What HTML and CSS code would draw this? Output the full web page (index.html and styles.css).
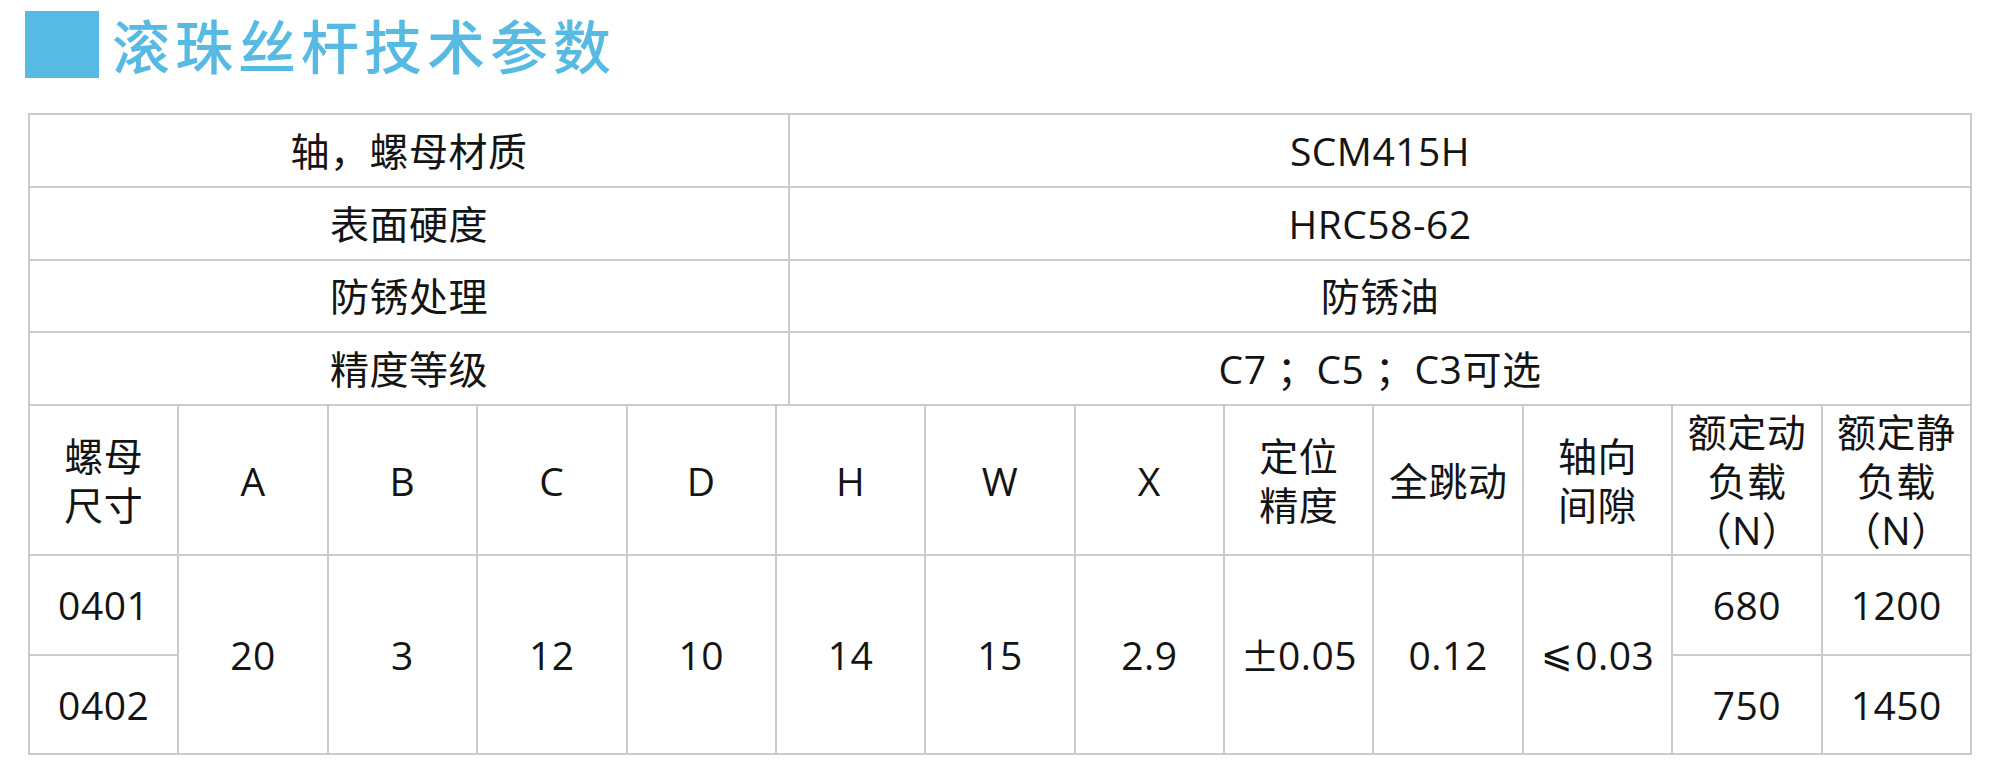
FILE: index.html
```html
<!DOCTYPE html>
<html lang="zh-CN">
<head>
<meta charset="utf-8">
<title>滚珠丝杆技术参数</title>
<link rel="stylesheet" href="styles.css">
</head>
<body>
<div class="page">
  <header class="heading">
    <span class="heading-mark"></span>
    <h1 class="heading-title">滚珠丝杆技术参数</h1>
  </header>

  <div class="spec">
    <div class="spec-top">
      <div class="cell">轴，螺母材质</div>
      <div class="cell latin">SCM415H</div>
      <div class="cell">表面硬度</div>
      <div class="cell latin">HRC58-62</div>
      <div class="cell">防锈处理</div>
      <div class="cell">防锈油</div>
      <div class="cell">精度等级</div>
      <div class="cell">C7 ；C5 ；C3可选</div>
    </div>

    <div class="spec-bottom">
      <div class="cell head">螺母<br>尺寸</div>
      <div class="cell head">A</div>
      <div class="cell head">B</div>
      <div class="cell head">C</div>
      <div class="cell head">D</div>
      <div class="cell head">H</div>
      <div class="cell head">W</div>
      <div class="cell head">X</div>
      <div class="cell head">定位<br>精度</div>
      <div class="cell head">全跳动</div>
      <div class="cell head">轴向<br>间隙</div>
      <div class="cell head">额定动<br>负载<br>（N）</div>
      <div class="cell head">额定静<br>负载<br>（N）</div>

      <div class="cell">0401</div>
      <div class="cell span2">20</div>
      <div class="cell span2">3</div>
      <div class="cell span2">12</div>
      <div class="cell span2">10</div>
      <div class="cell span2">14</div>
      <div class="cell span2">15</div>
      <div class="cell span2">2.9</div>
      <div class="cell span2"><span class="sym">±</span>0.05</div>
      <div class="cell span2">0.12</div>
      <div class="cell span2"><span class="le">⩽</span>0.03</div>
      <div class="cell">680</div>
      <div class="cell">1200</div>

      <div class="cell">0402</div>
      <div class="cell">750</div>
      <div class="cell">1450</div>
    </div>
  </div>
</div>
</body>
</html>
```

FILE: styles.css
```css
* {
  box-sizing: border-box;
}

html, body {
  margin: 0;
  padding: 0;
  background: #ffffff;
}

body {
  font-family: "Open Sans", "Noto Sans CJK SC", sans-serif;
  color: #1a1a1a;
}

.page {
  width: 2000px;
  height: 774px;
  padding: 11px 0 0 0;
}

.heading {
  display: flex;
  align-items: center;
  height: 67px;
  padding-left: 25px;
  gap: 13px;
}

.heading-mark {
  display: block;
  width: 74px;
  height: 67px;
  background: #56bae3;
}

.heading-title {
  margin: 0;
  font-family: "Noto Sans CJK SC", sans-serif;
  font-weight: 500;
  font-size: 58px;
  letter-spacing: 5px;
  line-height: 67px;
  color: #56bae3;
}

.spec {
  margin: 35px 0 0 28px;
  width: 1944px;
  border: 2px solid #cbcbcb;
  background: #cbcbcb;
  display: flex;
  flex-direction: column;
  gap: 2px;
}

.spec-top {
  display: grid;
  grid-template-columns: 758px 1fr;
  grid-auto-rows: 70.75px;
  gap: 2px;
}

.spec-bottom {
  display: grid;
  grid-template-columns: repeat(13, 1fr);
  grid-template-rows: 148px 97.5px 97.5px;
  gap: 2px;
}

.cell {
  background: #ffffff;
  display: flex;
  align-items: center;
  justify-content: center;
  text-align: center;
  font-size: 39px;
  font-weight: 400;
  line-height: 49px;
  letter-spacing: 0.5px;
  color: #141414;
}

.span2 {
  grid-row: span 2;
}

.sym {
  font-family: "Noto Sans CJK SC", sans-serif;
  margin-right: -2px;
}

.le {
  font-family: "DejaVu Sans", sans-serif;
  font-size: 38px;
  margin-right: 2px;
}
```
